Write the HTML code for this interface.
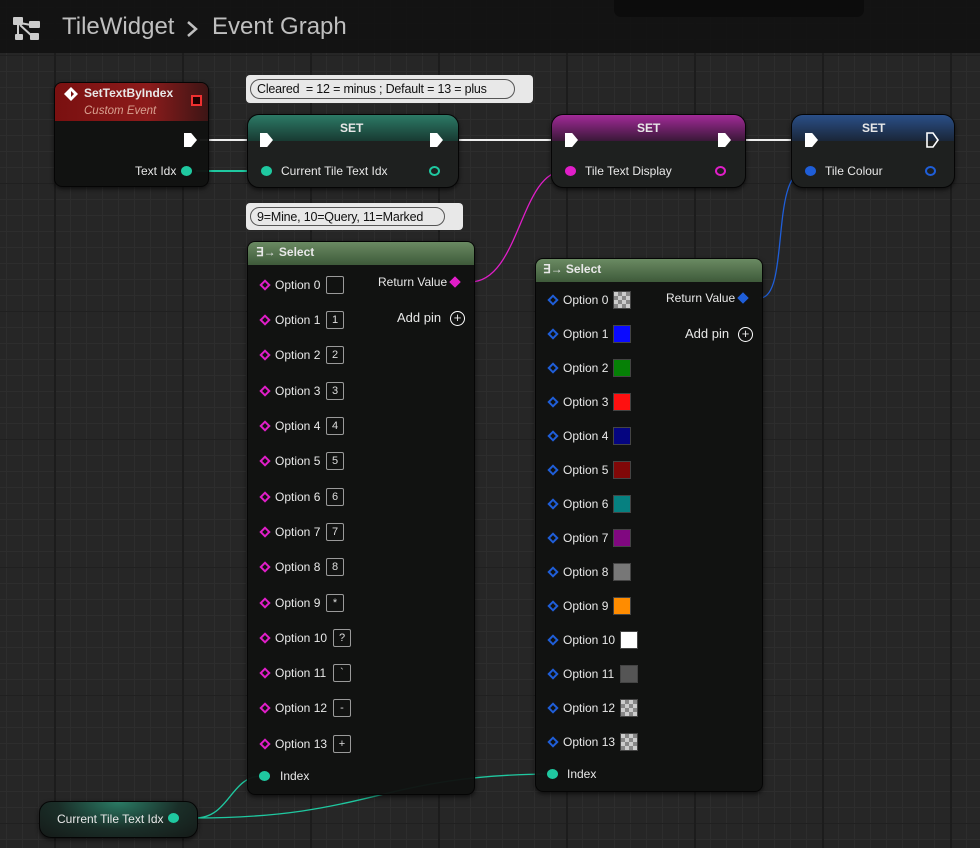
<!DOCTYPE html>
<html><head><meta charset="utf-8"><style>
*{margin:0;padding:0;box-sizing:border-box}
body{width:980px;height:848px;overflow:hidden;position:relative;font-family:"Liberation Sans",sans-serif;color:#e8e8e8;
background-color:#262626;
background-image:linear-gradient(90deg,#1c1c1c 0,#1c1c1c 2px,transparent 2px),linear-gradient(0deg,#202020 0,#202020 1px,transparent 1px),linear-gradient(90deg,#2d2d2d 1px,transparent 1px),linear-gradient(0deg,#2d2d2d 1px,transparent 1px);
background-size:128px 128px,128px 128px,16px 16px,16px 16px;
background-position:54px 0,0 56px,6px 0,0 8px}
.a{position:absolute}
.hdr{left:0;top:0;width:980px;height:53px;background:rgba(18,18,18,.93)}
.node{position:absolute;background:rgba(17,18,17,.96);border:1px solid #050505;border-radius:8px;box-shadow:0 2px 4px rgba(0,0,0,.6)}
.t{position:absolute;font-size:12px;white-space:nowrap;line-height:14px}
.dm{position:absolute;width:8px;height:8px;transform:rotate(45deg);border:2px solid #e01ec8}
.db{border-color:#1f5ed8}
.bx{position:absolute;width:18px;height:18px;border:1px solid #9a9a9a;border-radius:2px;font-size:11px;text-align:center;line-height:16px;color:#ddd}
.sw{position:absolute;width:18px;height:18px;border:1px solid #444}
.chk{background-color:#ccc;background-image:linear-gradient(45deg,#888 25%,transparent 25%,transparent 75%,#888 75%),linear-gradient(45deg,#888 25%,transparent 25%,transparent 75%,#888 75%);background-size:8px 8px;background-position:0 0,4px 4px}
.pin{position:absolute;width:11px;height:10px;border-radius:50%}
.exec{position:absolute;width:13px;height:14px;background:#fff;clip-path:polygon(0 0,55% 0,100% 50%,55% 100%,0 100%)}
.cm{position:absolute;background:#e8e8e8;border-radius:4px}
.cm .in{position:absolute;left:4px;top:4px;bottom:4px;border:1px solid #555;border-radius:11px;color:#111;font-size:12.5px;line-height:18px;padding:0 6px;white-space:nowrap;overflow:hidden;letter-spacing:-0.2px}
</style></head><body>
<div class="a hdr"></div>
<div class="a" style="left:614px;top:0;width:250px;height:17px;background:#0c0c0c;border-radius:0 0 7px 7px"></div>
<svg class="a" style="left:12px;top:16px" width="30" height="26" viewBox="0 0 30 26"><rect x="1" y="1" width="10" height="8" rx="1" fill="#ccc"/><rect x="17" y="5" width="11" height="7" rx="1" fill="#ccc"/><rect x="3" y="18" width="8" height="6" rx="1" fill="#ccc"/><rect x="18" y="17" width="9" height="7" rx="1" fill="#ccc"/><path d="M6 9V21M8 7L19 9M8 9L20 20" stroke="#ccc" stroke-width="2"/></svg>
<div class="t" style="left:62px;top:13px;font-size:24px;line-height:28px;color:#bfbfbf">TileWidget</div>
<svg class="a" style="left:185px;top:20px" width="14" height="18"><path d="M3 2L11 9L3 16" stroke="#bfbfbf" stroke-width="2.5" fill="none"/></svg>
<div class="t" style="left:212px;top:13px;font-size:24px;line-height:28px;color:#bfbfbf">Event Graph</div>

<svg class="a" style="left:0;top:0" width="980" height="848">
<g fill="none" stroke-width="2">
<path d="M200 140H258" stroke="#eee"/><path d="M450 140H562" stroke="#eee"/><path d="M737 140H802" stroke="#eee"/>
<path d="M196 171H262" stroke="#1fc8a0"/>
<path d="M470 282C520 282 520 171 564 171" stroke="#e01ec8" stroke-width="1.3"/>
<path d="M760 298C790 298 770 171 805 171" stroke="#1f5ed8" stroke-width="1.3"/>
<path d="M195 818C230 818 230 776 262 776" stroke="#1fc8a0" stroke-width="1.3"/>
<path d="M195 818C370 818 380 775 550 774" stroke="#1fc8a0" stroke-width="1.3"/>
</g></svg>

<!-- SetTextByIndex -->
<div class="node" style="left:54px;top:82px;width:155px;height:105px;overflow:hidden">
<div class="a" style="left:0;top:0;width:155px;height:38px;background:linear-gradient(90deg,#7a1010,#8c1b1b 60%,#3a1515)"></div>
</div>
<svg class="a" style="left:63px;top:86px" width="16" height="16"><path d="M8 1L15 8L8 15L1 8Z" fill="#fff"/><path d="M8 5L11 8L8 11Z" fill="#7a1010"/></svg>
<div class="t" style="left:84px;top:86px;font-weight:bold;font-size:12px">SetTextByIndex</div>
<div class="t" style="left:84px;top:104px;font-style:italic;color:#d8a090;font-size:11.5px">Custom Event</div>
<div class="a" style="left:191px;top:95px;width:11px;height:11px;border:2px solid #f03030;background:#200"></div>
<div class="exec" style="left:184px;top:133px"></div>
<div class="t" style="left:135px;top:164px">Text Idx</div>
<div class="pin" style="left:181px;top:166px;background:#1fc8a0"></div>

<!-- comment 1 -->
<div class="cm" style="left:246px;top:75px;width:287px;height:28px"><div class="in" style="right:18px">Cleared &nbsp;= 12 = minus ; Default = 13 = plus</div></div>

<!-- SET 1 -->
<div class="node" style="left:247px;top:114px;width:212px;height:74px;border-radius:12px;overflow:hidden;background:#1e201f">
<div class="a" style="left:0;top:0;width:212px;height:26px;background:linear-gradient(180deg,#2c7a66,#183a32)"></div></div>
<div class="t" style="left:340px;top:121px;font-weight:bold">SET</div>
<div class="exec" style="left:260px;top:133px"></div><div class="exec" style="left:430px;top:133px"></div>
<div class="pin" style="left:261px;top:166px;background:#1fc8a0"></div>
<div class="t" style="left:281px;top:164px">Current Tile Text Idx</div>
<div class="pin" style="left:429px;top:166px;border:2px solid #1fc8a0"></div>

<!-- SET 2 -->
<div class="node" style="left:551px;top:114px;width:195px;height:74px;border-radius:12px;overflow:hidden;background:#1e201f">
<div class="a" style="left:0;top:0;width:195px;height:26px;background:linear-gradient(180deg,#a22a98,#3a1838)"></div></div>
<div class="t" style="left:637px;top:121px;font-weight:bold">SET</div>
<div class="exec" style="left:565px;top:133px"></div><div class="exec" style="left:718px;top:133px"></div>
<div class="pin" style="left:565px;top:166px;background:#e01ec8"></div>
<div class="t" style="left:585px;top:164px">Tile Text Display</div>
<div class="pin" style="left:715px;top:166px;border:2px solid #e01ec8"></div>

<!-- SET 3 -->
<div class="node" style="left:791px;top:114px;width:164px;height:74px;border-radius:12px;overflow:hidden;background:#1e201f">
<div class="a" style="left:0;top:0;width:164px;height:26px;background:linear-gradient(180deg,#2a4f88,#1a2638)"></div></div>
<div class="t" style="left:862px;top:121px;font-weight:bold">SET</div>
<div class="exec" style="left:805px;top:133px"></div>
<svg class="a" style="left:926px;top:132px" width="14" height="16"><path d="M1 1H7L12 8L7 15H1Z" fill="none" stroke="#fff" stroke-width="1.6"/></svg>
<div class="pin" style="left:805px;top:166px;background:#1f5ed8"></div>
<div class="t" style="left:825px;top:164px">Tile Colour</div>
<div class="pin" style="left:925px;top:166px;border:2px solid #1f5ed8"></div>

<!-- comment 2 -->
<div class="cm" style="left:246px;top:203px;width:217px;height:27px"><div class="in" style="right:18px">9=Mine, 10=Query, 11=Marked</div></div>

<!-- Select 1 -->
<div class="node" style="left:247px;top:241px;width:228px;height:554px;overflow:hidden">
<div class="a" style="left:0;top:0;width:228px;height:23px;background:linear-gradient(180deg,#6a8a62,#3e5a3a)"></div></div>
<div class="t" style="left:256px;top:245px;font-weight:bold">&#8707;&#8594; Select</div>
<div class="t" style="left:378px;top:275px">Return Value</div>
<div class="dm" style="left:451px;top:278px;background:#e01ec8"></div>
<div class="t" style="left:397px;top:311px;font-size:13px">Add pin</div>
<div class="a" style="left:450px;top:311px;width:15px;height:15px;border:1.5px solid #fff;border-radius:50%;font-size:13px;line-height:12px;text-align:center">+</div>

<!-- Select 2 -->
<div class="node" style="left:535px;top:258px;width:228px;height:534px;overflow:hidden">
<div class="a" style="left:0;top:0;width:228px;height:23px;background:linear-gradient(180deg,#6a8a62,#3e5a3a)"></div></div>
<div class="t" style="left:543px;top:262px;font-weight:bold">&#8707;&#8594; Select</div>
<div class="t" style="left:666px;top:291px">Return Value</div>
<div class="dm db" style="left:739px;top:294px;background:#1f5ed8"></div>
<div class="t" style="left:685px;top:327px;font-size:13px">Add pin</div>
<div class="a" style="left:738px;top:327px;width:15px;height:15px;border:1.5px solid #fff;border-radius:50%;font-size:13px;line-height:12px;text-align:center">+</div>

<!-- left rows -->
<div class="dm" style="left:261px;top:281px"></div><div class="t" style="left:275px;top:278px">Option 0</div><div class="bx" style="left:326px;top:276px"></div>
<div class="dm" style="left:261px;top:316px"></div><div class="t" style="left:275px;top:313px">Option 1</div><div class="bx" style="left:326px;top:311px">1</div>
<div class="dm" style="left:261px;top:351px"></div><div class="t" style="left:275px;top:348px">Option 2</div><div class="bx" style="left:326px;top:346px">2</div>
<div class="dm" style="left:261px;top:387px"></div><div class="t" style="left:275px;top:384px">Option 3</div><div class="bx" style="left:326px;top:382px">3</div>
<div class="dm" style="left:261px;top:422px"></div><div class="t" style="left:275px;top:419px">Option 4</div><div class="bx" style="left:326px;top:417px">4</div>
<div class="dm" style="left:261px;top:457px"></div><div class="t" style="left:275px;top:454px">Option 5</div><div class="bx" style="left:326px;top:452px">5</div>
<div class="dm" style="left:261px;top:493px"></div><div class="t" style="left:275px;top:490px">Option 6</div><div class="bx" style="left:326px;top:488px">6</div>
<div class="dm" style="left:261px;top:528px"></div><div class="t" style="left:275px;top:525px">Option 7</div><div class="bx" style="left:326px;top:523px">7</div>
<div class="dm" style="left:261px;top:563px"></div><div class="t" style="left:275px;top:560px">Option 8</div><div class="bx" style="left:326px;top:558px">8</div>
<div class="dm" style="left:261px;top:599px"></div><div class="t" style="left:275px;top:596px">Option 9</div><div class="bx" style="left:326px;top:594px">*</div>
<div class="dm" style="left:261px;top:634px"></div><div class="t" style="left:275px;top:631px">Option 10</div><div class="bx" style="left:333px;top:629px">?</div>
<div class="dm" style="left:261px;top:669px"></div><div class="t" style="left:275px;top:666px">Option 11</div><div class="bx" style="left:333px;top:664px">`</div>
<div class="dm" style="left:261px;top:704px"></div><div class="t" style="left:275px;top:701px">Option 12</div><div class="bx" style="left:333px;top:699px">-</div>
<div class="dm" style="left:261px;top:740px"></div><div class="t" style="left:275px;top:737px">Option 13</div><div class="bx" style="left:333px;top:735px">+</div>
<div class="pin" style="left:259px;top:771px;background:#1fc8a0"></div><div class="t" style="left:280px;top:769px">Index</div>

<!-- right rows -->
<div class="dm db" style="left:549px;top:296px"></div><div class="t" style="left:563px;top:293px">Option 0</div><div class="sw chk" style="left:613px;top:291px"></div>
<div class="dm db" style="left:549px;top:330px"></div><div class="t" style="left:563px;top:327px">Option 1</div><div class="sw" style="left:613px;top:325px;background:#0a0aff"></div>
<div class="dm db" style="left:549px;top:364px"></div><div class="t" style="left:563px;top:361px">Option 2</div><div class="sw" style="left:613px;top:359px;background:#068006"></div>
<div class="dm db" style="left:549px;top:398px"></div><div class="t" style="left:563px;top:395px">Option 3</div><div class="sw" style="left:613px;top:393px;background:#ff1010"></div>
<div class="dm db" style="left:549px;top:432px"></div><div class="t" style="left:563px;top:429px">Option 4</div><div class="sw" style="left:613px;top:427px;background:#050580"></div>
<div class="dm db" style="left:549px;top:466px"></div><div class="t" style="left:563px;top:463px">Option 5</div><div class="sw" style="left:613px;top:461px;background:#800808"></div>
<div class="dm db" style="left:549px;top:500px"></div><div class="t" style="left:563px;top:497px">Option 6</div><div class="sw" style="left:613px;top:495px;background:#068080"></div>
<div class="dm db" style="left:549px;top:534px"></div><div class="t" style="left:563px;top:531px">Option 7</div><div class="sw" style="left:613px;top:529px;background:#800880"></div>
<div class="dm db" style="left:549px;top:568px"></div><div class="t" style="left:563px;top:565px">Option 8</div><div class="sw" style="left:613px;top:563px;background:#777"></div>
<div class="dm db" style="left:549px;top:602px"></div><div class="t" style="left:563px;top:599px">Option 9</div><div class="sw" style="left:613px;top:597px;background:#ff8c00"></div>
<div class="dm db" style="left:549px;top:636px"></div><div class="t" style="left:563px;top:633px">Option 10</div><div class="sw" style="left:620px;top:631px;background:#fff"></div>
<div class="dm db" style="left:549px;top:670px"></div><div class="t" style="left:563px;top:667px">Option 11</div><div class="sw" style="left:620px;top:665px;background:#555"></div>
<div class="dm db" style="left:549px;top:704px"></div><div class="t" style="left:563px;top:701px">Option 12</div><div class="sw chk" style="left:620px;top:699px"></div>
<div class="dm db" style="left:549px;top:738px"></div><div class="t" style="left:563px;top:735px">Option 13</div><div class="sw chk" style="left:620px;top:733px"></div>
<div class="pin" style="left:547px;top:769px;background:#1fc8a0"></div><div class="t" style="left:567px;top:767px">Index</div>

<!-- getter -->
<div class="node" style="left:39px;top:801px;width:159px;height:37px;border-radius:12px;background:radial-gradient(ellipse at 50% 0,#2a7a64 0,#1a2e28 55%,#151a18 100%)"></div>
<div class="t" style="left:57px;top:812px">Current Tile Text Idx</div>
<div class="pin" style="left:168px;top:813px;background:#1fc8a0"></div>
</body></html>
